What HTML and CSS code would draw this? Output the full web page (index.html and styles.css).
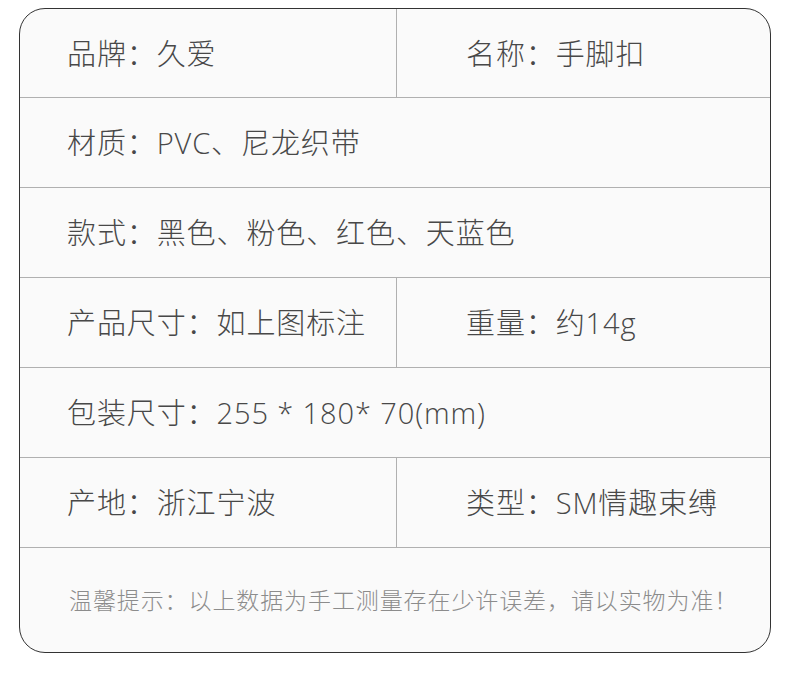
FILE: index.html
```html
<!DOCTYPE html>
<html lang="zh">
<head>
<meta charset="utf-8">
<link rel="stylesheet" href="styles.css">
</head>
<body>
<div class="page">
  <div class="spec">
    <div class="row split">
      <div class="cell left">品牌：久爱</div>
      <div class="cell right">名称：手脚扣</div>
    </div>
    <div class="row">
      <div class="cell left">材质：PVC、尼龙织带</div>
    </div>
    <div class="row">
      <div class="cell left">款式：黑色、粉色、红色、天蓝色</div>
    </div>
    <div class="row split">
      <div class="cell left">产品尺寸：如上图标注</div>
      <div class="cell right">重量：约14g</div>
    </div>
    <div class="row">
      <div class="cell left">包装尺寸：255 * 180* 70(mm)</div>
    </div>
    <div class="row split">
      <div class="cell left">产地：浙江宁波</div>
      <div class="cell right">类型：SM情趣束缚</div>
    </div>
    <div class="note">温馨提示：以上数据为手工测量存在少许误差，请以实物为准！</div>
  </div>
</div>
</body>
</html>
```
FILE: styles.css
```css
html, body {
  margin: 0;
  padding: 0;
  background: #ffffff;
}
.page {
  padding: 8px 19px 0 19px;
  width: 752px;
}
.spec {
  box-sizing: border-box;
  width: 752px;
  height: 645px;
  border: 1.5px solid #333;
  border-radius: 26px;
  background: #fafafa;
  overflow: hidden;
  display: flex;
  flex-direction: column;
  font-family: "Open Sans", "Noto Sans CJK SC", sans-serif;
  color: #484848;
}
.row {
  height: 90px;
  flex: 0 0 90px;
  box-sizing: border-box;
  border-bottom: 1px solid #b0b0b0;
  display: flex;
}
.row:first-child {
  height: 89px;
  flex-basis: 89px;
}
.cell {
  display: flex;
  align-items: center;
  padding-bottom: 3px;
  font-size: 29px;
  letter-spacing: 0.9px;
  font-weight: 300;
  white-space: nowrap;
}
.left {
  padding-left: 47px;
  flex: 1;
}
.split .left {
  flex: 0 0 377px;
  box-sizing: border-box;
  border-right: 1px solid #b0b0b0;
}
.split .right {
  padding-left: 69px;
  flex: 1;
}
.note {
  flex: 1;
  display: flex;
  align-items: center;
  padding-left: 49px;
  padding-bottom: 3px;
  font-family: "Noto Sans CJK SC", sans-serif;
  font-size: 23px;
  color: #8c8c8c;
  font-weight: 300;
  letter-spacing: 0.9px;
  white-space: nowrap;
}
```
